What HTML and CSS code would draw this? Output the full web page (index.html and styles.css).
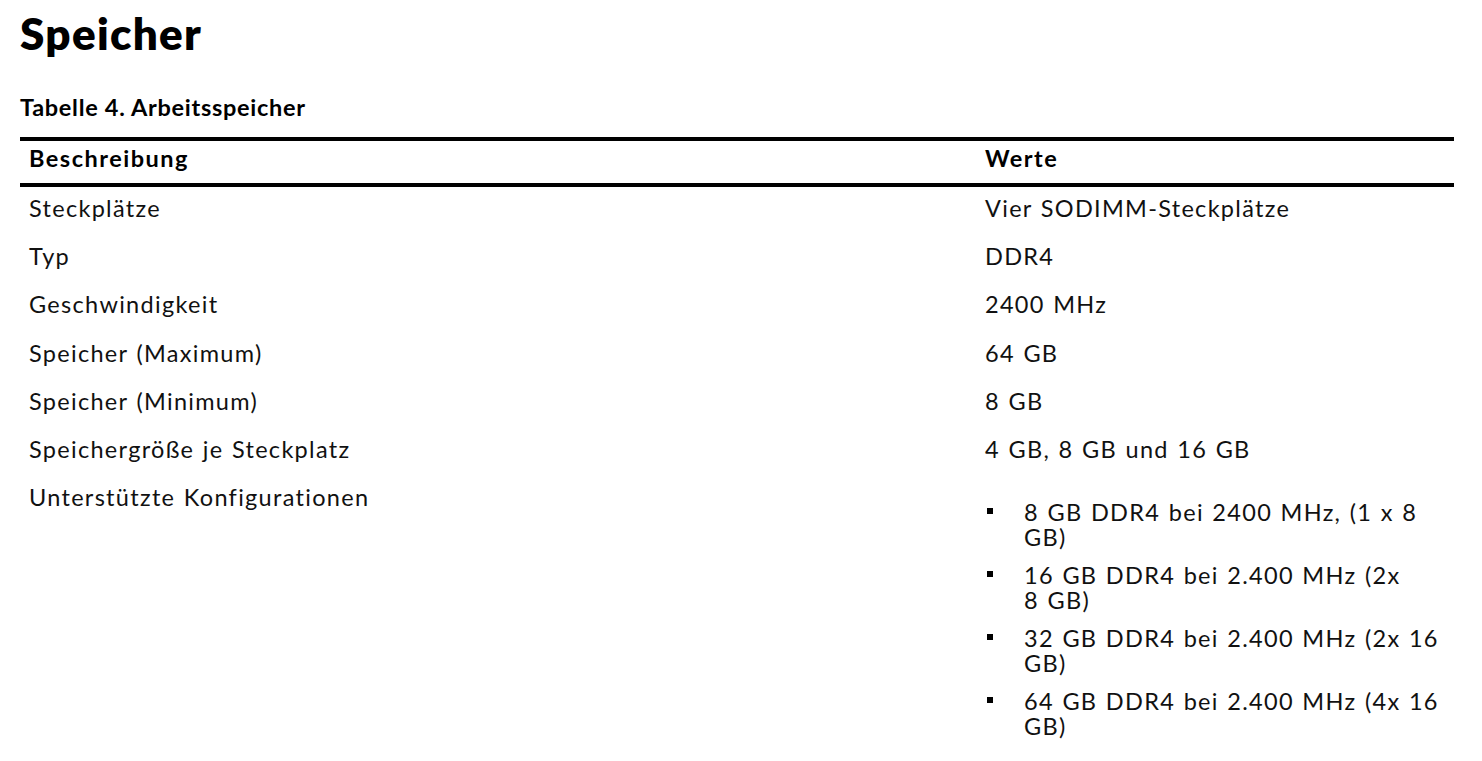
FILE: index.html
```html
<!DOCTYPE html>
<html lang="de">
<head>
<meta charset="utf-8">
<title>Speicher</title>
<link rel="stylesheet" href="styles.css">
</head>
<body>
<main class="page">
  <h1 class="title">Speicher</h1>
  <p class="caption">Tabelle 4. Arbeitsspeicher</p>
  <table class="spec">
    <thead>
      <tr><th class="col-desc">Beschreibung</th><th>Werte</th></tr>
    </thead>
    <tbody>
      <tr><td>Steckplätze</td><td>Vier SODIMM-Steckplätze</td></tr>
      <tr><td>Typ</td><td>DDR4</td></tr>
      <tr><td>Geschwindigkeit</td><td>2400 MHz</td></tr>
      <tr><td>Speicher (Maximum)</td><td>64 GB</td></tr>
      <tr><td>Speicher (Minimum)</td><td>8 GB</td></tr>
      <tr><td>Speichergröße je Steckplatz</td><td>4 GB, 8 GB und 16 GB</td></tr>
      <tr>
        <td>Unterstützte Konfigurationen</td>
        <td>
          <ul class="configs">
            <li><span>8 GB DDR4 bei 2400 MHz, (1 x 8<br>GB)</span></li>
            <li><span>16 GB DDR4 bei 2.400 MHz (2x<br>8 GB)</span></li>
            <li><span>32 GB DDR4 bei 2.400 MHz (2x 16<br>GB)</span></li>
            <li><span>64 GB DDR4 bei 2.400 MHz (4x 16<br>GB)</span></li>
          </ul>
        </td>
      </tr>
    </tbody>
  </table>
</main>
</body>
</html>
```

FILE: styles.css
```css
html, body {
  margin: 0;
  padding: 0;
  background: #ffffff;
}

body {
  font-family: Lato, "Noto Sans", "Liberation Sans", sans-serif;
  color: #000000;
}

.page {
  padding: 0 28px 0 20px;
}

.title {
  margin: 7px 0 0 0;
  font-size: 44px;
  line-height: 52px;
  font-weight: 800;
  letter-spacing: 1.3px;
  color: #000;
}

.caption {
  margin: 34px 0 0 0;
  font-size: 23.5px;
  line-height: 28px;
  font-weight: 700;
  letter-spacing: 0.7px;
}

.spec {
  margin-top: 16px;
  width: 1434px;
  border-collapse: collapse;
  table-layout: fixed;
}

.spec th {
  text-align: left;
  font-weight: 700;
  font-size: 23.5px;
  line-height: 28px;
  letter-spacing: 1.5px;
  padding: 3.4px 9px 10.6px 9px;
  border-top: 4px solid #000;
  border-bottom: 4px solid #000;
}

.spec .col-desc {
  width: 938px;
}

.spec td {
  vertical-align: top;
  font-size: 23.5px;
  line-height: 28px;
  font-weight: 400;
  letter-spacing: 1.3px;
  word-spacing: 1.2px;
  color: #111;
  padding: 6.7px 9px 13.6px 9px;
}

.configs {
  list-style: none;
  margin: 17px 0 0 0;
  padding: 0;
}

.configs li {
  display: flex;
  line-height: 25px;
  margin-bottom: 13px;
  white-space: nowrap;
}

.configs li::before {
  content: "";
  flex: none;
  width: 6px;
  height: 6px;
  background: #000;
  margin: 8px 31px 0 2px;
}
```
